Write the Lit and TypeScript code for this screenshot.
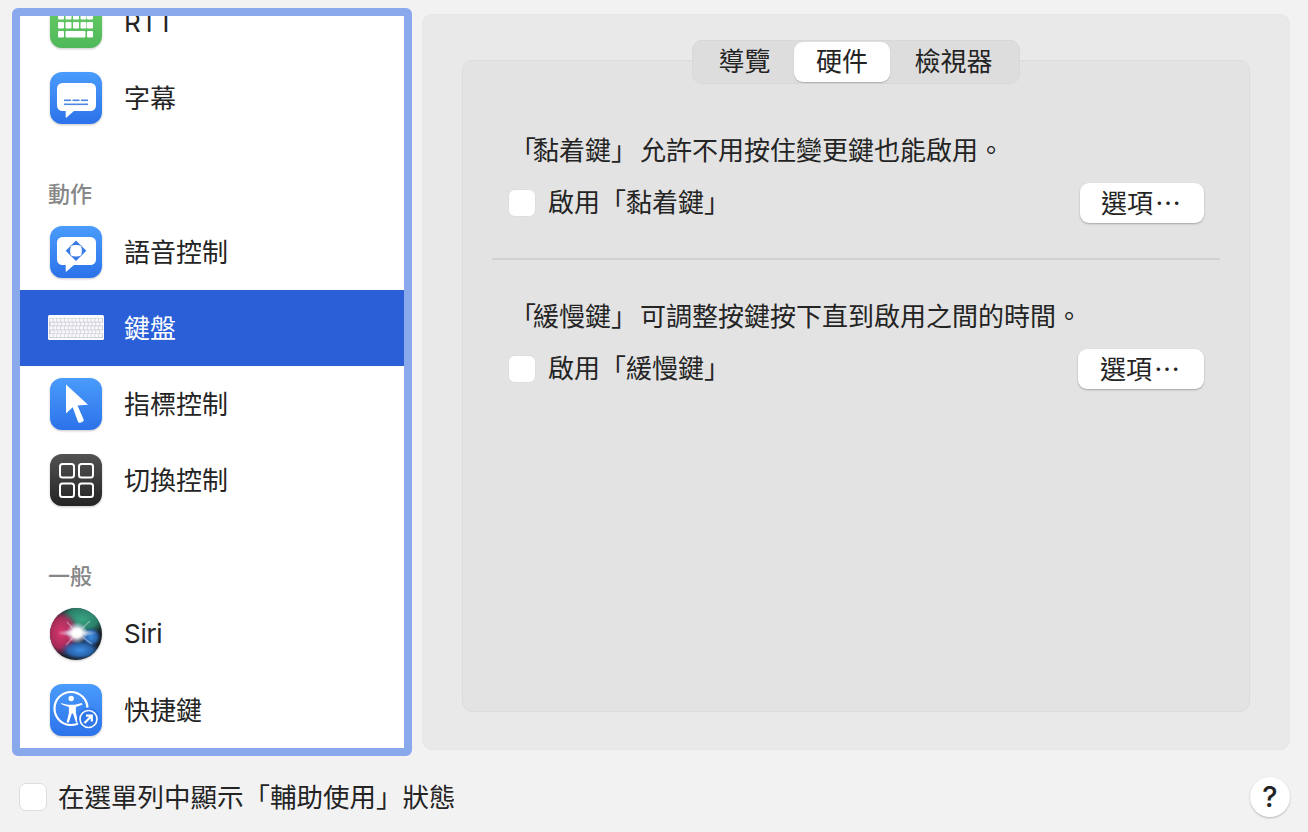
import { LitElement, html, css, svg } from "lit";
import { customElement } from "lit/decorators.js";

const blueDefs = (id: string) => svg`<defs><linearGradient id=${id} x1="0" y1="0" x2="0" y2="1"><stop offset="0" stop-color="#4a9cfc"/><stop offset="1" stop-color="#2c72ea"/></linearGradient></defs>`;
const bubble = svg`<path d="M12.500 11h28a5.500 5.500 0 0 1 5.500 5.500v17a5.500 5.500 0 0 1-5.500 5.500H24l-7.500 6.500q-.8.600-.8-.5V39h-3.200A5.500 5.500 0 0 1 7 33.500v-17A5.500 5.500 0 0 1 12.500 11z" fill="#fff"/>`;

const rtt = html`<svg class="ico" viewBox="0 0 52 52">
  <defs><linearGradient id="g1" x1="0" y1="0" x2="0" y2="1"><stop offset="0" stop-color="#6ad068"/><stop offset="1" stop-color="#4fb858"/></linearGradient></defs>
  <rect width="52" height="52" rx="12" fill="url(#g1)"/>
  <g fill="#fff">
    ${[17, 26].map((y) => [8, 15.500, 23, 30.500, 37].map((x) => svg`<rect x=${x} y=${y} width="6" height="6.500" rx="1"/>`))}
    <rect x="8" y="35" width="6" height="6.500" rx="1"/><rect x="15.500" y="35" width="20" height="6.500" rx="1"/><rect x="37" y="35" width="6" height="6.500" rx="1"/>
  </g></svg>`;

const caption = html`<svg class="ico" viewBox="0 0 52 52">${blueDefs("g2")}
  <rect width="52" height="52" rx="12" fill="url(#g2)"/>${bubble}
  <g fill="#4f86e0"><rect x="14" y="27.500" width="7" height="1.600"/><rect x="22.500" y="27.500" width="7" height="1.600"/><rect x="31" y="27.500" width="7" height="1.600"/><rect x="14" y="31.500" width="24" height="1.600"/></g></svg>`;

const voice = html`<svg class="ico" viewBox="0 0 52 52">${blueDefs("g3")}
  <rect width="52" height="52" rx="12" fill="url(#g3)"/>${bubble}
  <g fill="#3a7ae4">
    <path d="M26 14.500l5.800 5.700q-5.800-2.600-11.600 0z"/>
    <path d="M26 35l5.800-5.700q-5.800 2.600-11.600 0z"/>
    <path d="M15.700 24.800l5.700-5.800q-2.600 5.800 0 11.600z"/>
    <path d="M36.300 24.800l-5.700-5.800q2.600 5.800 0 11.600z"/>
  </g></svg>`;

const keys: number[][] = [];
for (let r = 0; r < 5; r++) for (let c = 0; c < 14; c++) keys.push([1.500 + c * 3.800 + (r % 2) * 1, 16.500 + r * 3.900]);
const keyboard = html`<svg class="ico wide" viewBox="0 0 56 52">
  <rect x="0" y="13" width="56" height="25" rx="1.500" fill="#fbfbfc"/>
  <rect x="1" y="16" width="54" height="20" fill="#c8cad2"/>
  ${keys.map(([x, y]) => svg`<rect x=${x} y=${y} width="3.200" height="3.200" rx=".5" fill="#f8f8fa"/>`)}</svg>`;

const pointer = html`<svg class="ico" viewBox="0 0 52 52">${blueDefs("g4")}
  <rect width="52" height="52" rx="12" fill="url(#g4)"/>
  <path d="M16 6.500V35.500l6.700-6.200 5.300 14.500q.7 1.500 2.200.9l2.500-1q1.500-.7.900-2.200L27.500 27.500l10.500-.7z" fill="#fff"/></svg>`;

const switchCtl = html`<svg class="ico" viewBox="0 0 52 52">
  <defs><linearGradient id="g5" x1="0" y1="0" x2="0" y2="1"><stop offset="0" stop-color="#525252"/><stop offset="1" stop-color="#242424"/></linearGradient></defs>
  <rect width="52" height="52" rx="12" fill="url(#g5)"/>
  <g fill="none" stroke="#fff" stroke-width="2"><rect x="10" y="10" width="14" height="13.500" rx="2.500"/><rect x="29" y="10" width="14" height="13.500" rx="2.500"/><rect x="10" y="29.500" width="14" height="13.500" rx="2.500"/><rect x="29" y="29.500" width="14" height="13.500" rx="2.500"/></g></svg>`;

const siri = html`<svg class="ico" viewBox="0 0 52 52">
  <defs>
    <radialGradient id="s1"><stop offset="0" stop-color="#d93a70"/><stop offset=".65" stop-color="#b52a5c" stop-opacity=".9"/><stop offset="1" stop-color="#8a1f4a" stop-opacity="0"/></radialGradient>
    <radialGradient id="s2"><stop offset="0" stop-color="#3aa583"/><stop offset=".6" stop-color="#2c8a70" stop-opacity=".9"/><stop offset="1" stop-color="#1f6a55" stop-opacity="0"/></radialGradient>
    <radialGradient id="s3"><stop offset="0" stop-color="#3e8fe6"/><stop offset=".6" stop-color="#2d6fc0" stop-opacity=".85"/><stop offset="1" stop-color="#1c4f8f" stop-opacity="0"/></radialGradient>
    <radialGradient id="s4"><stop offset="0" stop-color="#fff"/><stop offset=".4" stop-color="#fff" stop-opacity=".95"/><stop offset="1" stop-color="#d0d8ff" stop-opacity="0"/></radialGradient>
    <clipPath id="sc"><circle cx="26" cy="26" r="26"/></clipPath>
  </defs>
  <circle cx="26" cy="26" r="26" fill="#1b222b"/>
  <g clip-path="url(#sc)">
    <ellipse cx="32" cy="11" rx="26" ry="18" fill="url(#s2)"/>
    <ellipse cx="11" cy="25" rx="18" ry="23" fill="url(#s1)"/>
    <ellipse cx="30" cy="42" rx="20" ry="10" fill="url(#s3)"/>
    <ellipse cx="41" cy="29" rx="10" ry="10" fill="url(#s3)"/>
    <ellipse cx="27" cy="25" rx="20" ry="4" fill="url(#s4)" opacity=".7"/>
    <path d="M27 25L40 13M27 25L42 36M27 25L16 37M27 25L17 14" stroke="#fff" stroke-width="1.500" opacity=".35"/>
    <circle cx="27" cy="25" r="11" fill="url(#s4)"/>
  </g></svg>`;

const shortcut = html`<svg class="ico" viewBox="0 0 52 52">${blueDefs("g6")}
  <rect width="52" height="52" rx="12" fill="url(#g6)"/>
  <circle cx="21" cy="24.500" r="16.500" fill="none" stroke="#fff" stroke-width="2.200"/>
  <g fill="#fff"><circle cx="21.200" cy="14.500" r="2.700"/><path d="M10.500 19l7.200 1.700h7l7.200-1.700.5 1.800-6.500 2.200v6l2.300 9.500h-2.200l-3-9h-1.200l-3 9h-2.200l2.300-9.500v-6l-6.500-2.200z"/></g>
  <circle cx="38.500" cy="35" r="11.500" fill="#3079ec"/>
  <circle cx="38.500" cy="35" r="8.500" fill="#2f76e8" stroke="#fff" stroke-width="1.600"/>
  <path d="M34.500 39l7-7m-5.500-.3h5.800v5.800" fill="none" stroke="#fff" stroke-width="2.200"/></svg>`;

@customElement("app-root")
export class AppRoot extends LitElement {
  static styles = css`
    :host {
      display: block;
      width: 1308px;
      height: 832px;
      overflow: hidden;
      background: #f3f2f3;
      color: #242424;
      font-family: "Inter", "Noto Sans CJK TC", sans-serif;
      font-size: 26px;
    }
    * { box-sizing: border-box; }
    .page { display: flex; flex-direction: column; padding-top: 8px; }
    .main { display: flex; align-items: flex-start; padding-left: 12px; }
    .sidebar {
      width: 400px;
      height: 748px;
      border: 8px solid #8aa8ec;
      border-radius: 6px;
      background: #fff;
      overflow: hidden;
      flex: none;
    }
    .list { margin-top: -32px; display: flex; flex-direction: column; }
    .row {
      height: 76px;
      display: flex;
      align-items: center;
      gap: 22px;
      padding-left: 30px;
      line-height: 36px;
      flex: none;
    }
    .row span { padding-top: 2px; }
    .row .latin { letter-spacing: -0.3px; padding-top: 0; }
    .row.sel { background: #2a5fd8; color: #fff; }
    .ico {
      width: 52px;
      height: 52px;
      flex: none;
      overflow: visible;
      filter: drop-shadow(0 1px 1px rgba(0, 0, 0, 0.22));
    }
    .ico.wide { width: 56px; margin: 0 -2px; filter: none; }
    .head {
      height: 78px;
      display: flex;
      align-items: flex-end;
      padding: 0 0 2px 28px;
      color: #878787;
      font-size: 22px;
      font-weight: 500;
      line-height: 36px;
      flex: none;
    }
    .panel {
      width: 868px;
      height: 736px;
      margin: 6px 0 0 10px;
      padding: 25px 39px 37px;
      background: #e9e9e9;
      border: 1px solid #e6e6e6;
      border-radius: 10px;
      display: flex;
      flex-direction: column;
      align-items: center;
    }
    .tabs {
      width: 328px;
      height: 44px;
      padding: 2px;
      display: flex;
      background: #dddddd;
      border: 1px solid #d8d8d8;
      border-radius: 10px;
      position: relative;
      z-index: 1;
      flex: none;
    }
    .tab {
      display: flex;
      align-items: center;
      justify-content: center;
      line-height: 36px;
      margin: -1px 0;
    }
    .t1 { width: 99px; }
    .t2 { width: 96px; background: #fff; border-radius: 9px; box-shadow: 0 1px 1px rgba(0, 0, 0, 0.2); }
    .t3 { width: 127px; }
    .box {
      align-self: stretch;
      flex: 1;
      margin-top: -24px;
      padding: 72px 45px 0 45px;
      background: #e3e3e3;
      border: 1px solid #dcdcdc;
      border-radius: 10px;
    }
    .desc { line-height: 36px; padding-left: 2px; }
    .ql { letter-spacing: -3px; }
    .qr { letter-spacing: 3px; }
    .ctl { display: flex; align-items: center; margin-top: 14px; height: 40px; }
    .check {
      width: 28px;
      height: 28px;
      background: #fff;
      border: 1px solid #dedede;
      border-radius: 7px;
      flex: none;
    }
    .ctl .label { margin-left: 12px; flex: 1; line-height: 36px; }
    .btn {
      height: 40px;
      background: #fff;
      border-radius: 9px;
      box-shadow: 0 1px 2px rgba(0, 0, 0, 0.28);
      font-family: "Noto Sans CJK TC", sans-serif;
      line-height: 38px;
      flex: none;
    }
    .dots { margin-left: 2px; }
    .b1 { width: 124px; padding-left: 21px; }
    .b2 { width: 126px; padding-left: 22px; }
    hr {
      height: 2px;
      border: 0;
      background: #d2d2d2;
      margin: 35px -16px 39px -16px;
    }
    .foot {
      margin-top: 21px;
      height: 40px;
      padding: 0 18px 0 19px;
      display: flex;
      align-items: center;
    }
    .foot .label { margin-left: 11px; flex: 1; font-size: 26.5px; line-height: 36px; }
    .help {
      width: 40px;
      height: 40px;
      border-radius: 50%;
      background: #fff;
      box-shadow: 0 1px 2px rgba(0, 0, 0, 0.25);
      display: flex;
      align-items: center;
      justify-content: center;
      font-size: 29px;
      font-weight: 500;
      line-height: 40px;
      flex: none;
    }
  `;

  private item(icon: unknown, label: string, cls = "") {
    return html`<div class="row ${cls}">${icon}<span class=${cls === "latin" ? "latin" : ""}>${label}</span></div>`;
  }

  render() {
    return html`<div class="page">
      <div class="main">
        <div class="sidebar">
          <div class="list">
            ${this.item(rtt, "RTT")}
            ${this.item(caption, "字幕")}
            <div class="head">動作</div>
            ${this.item(voice, "語音控制")}
            ${this.item(keyboard, "鍵盤", "sel")}
            ${this.item(pointer, "指標控制")}
            ${this.item(switchCtl, "切換控制")}
            <div class="head">一般</div>
            ${this.item(siri, "Siri", "latin")}
            ${this.item(shortcut, "快捷鍵")}
          </div>
        </div>
        <div class="panel">
          <div class="tabs">
            <div class="tab t1">導覽</div>
            <div class="tab t2">硬件</div>
            <div class="tab t3">檢視器</div>
          </div>
          <div class="box">
            <div class="desc"><span class="ql">「</span>黏着鍵<span class="qr">」</span>允許不用按住變更鍵也能啟用。</div>
            <div class="ctl"><div class="check"></div><div class="label">啟用「黏着鍵」</div><div class="btn b1">選項<span class="dots">…</span></div></div>
            <hr />
            <div class="desc"><span class="ql">「</span>緩慢鍵<span class="qr">」</span>可調整按鍵按下直到啟用之間的時間。</div>
            <div class="ctl"><div class="check"></div><div class="label">啟用「緩慢鍵」</div><div class="btn b2">選項<span class="dots">…</span></div></div>
          </div>
        </div>
      </div>
      <div class="foot">
        <div class="check"></div>
        <div class="label">在選單列中顯示「輔助使用」狀態</div>
        <div class="help">?</div>
      </div>
    </div>`;
  }
}
